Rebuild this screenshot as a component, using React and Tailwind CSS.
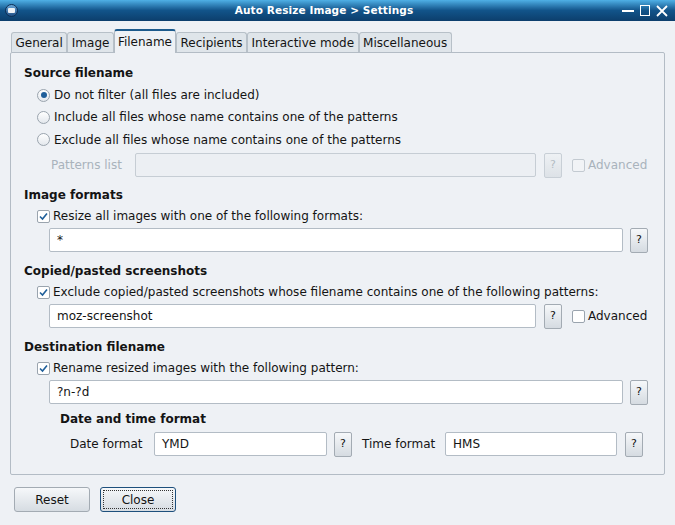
import React from 'react';

function Radio({ on }) {
  return (
    <span className="w-[13px] h-[13px] rounded-full border border-[#9aa4ae] bg-gradient-to-b from-[#ffffff] to-[#e3e8ed] flex items-center justify-center shrink-0">
      {on && <span className="w-[6px] h-[6px] rounded-full bg-[#1f5f9a]" />}
    </span>
  );
}

function Check({ on, disabled }) {
  return (
    <span className={`w-[13px] h-[13px] rounded-[2px] border flex items-center justify-center shrink-0 ${disabled ? 'border-[#c3cad1] bg-[#f1f3f6]' : 'border-[#9aa4ae] bg-white'}`}>
      {on && (
        <svg width="9" height="9" viewBox="0 0 9 9">
          <path d="M1 4.5 L3.5 7 L8 1.5" fill="none" stroke="#1f5f9a" strokeWidth="1.6" />
        </svg>
      )}
    </span>
  );
}

function Help({ disabled }) {
  return (
    <span className={`w-[18px] h-[25px] rounded-[2px] border flex items-center justify-center text-[11px] shrink-0 bg-gradient-to-b ${disabled ? 'border-[#c8cfd6] from-[#eef1f4] to-[#dde2e7] text-[#b3bcc4]' : 'border-[#a3abb3] from-[#f6f8fa] to-[#d5dbe1] text-[#111]'}`}>
      ?
    </span>
  );
}

function Field({ w, value, disabled }) {
  return (
    <div className={`h-[24px] border rounded-[2px] px-[7px] flex items-center ${w} ${disabled ? 'border-[#c6cdd4] bg-[#eceff3]' : 'border-[#b3bcc5] bg-white'}`}>
      {value}
    </div>
  );
}

function Heading({ children, className = '' }) {
  return <div className={`h-[22px] flex items-center font-bold ${className}`}>{children}</div>;
}

const tabs = ['General', 'Image', 'Filename', 'Recipients', 'Interactive mode', 'Miscellaneous'];

export default function App() {
  return (
    <div className="w-[675px] h-[525px] bg-[#eef1f5] font-['DejaVu_Sans',sans-serif] text-[12px] text-[#141414] flex flex-col overflow-hidden">
      {/* title bar */}
      <div className="h-[21px] bg-gradient-to-b from-[#4fb0e6] via-[#12548a] to-[#0c3e6c] flex items-center px-[5px] text-white">
        <span className="w-[13px] h-[13px] rounded-full bg-gradient-to-b from-[#6aa7d8] to-[#1f4f86] border border-[#0d2f55] flex items-center justify-center">
          <span className="w-[7px] h-[5px] bg-[#eef2f6] rounded-[1px]" />
        </span>
        <div className="flex-1 text-center font-bold text-[10.5px] tracking-[0.1px] pl-[8px]">Auto Resize Image &gt; Settings</div>
        <div className="flex items-center gap-[6px] pr-[2px]">
          <span className="w-[12px] h-[2px] bg-white" />
          <span className="w-[10px] h-[11px] border-[1.5px] border-white" />
          <svg width="12" height="12" viewBox="0 0 12 12">
            <path d="M1 1 L11 11 M11 1 L1 11" stroke="white" strokeWidth="1.8" />
          </svg>
        </div>
      </div>

      <div className="px-[10px] pt-[8px] flex flex-col">
        {/* tabs */}
        <div className="h-[23px] flex items-end pl-[1px] relative z-10">
          {tabs.map((t) =>
            t === 'Filename' ? (
              <div key={t} className="h-[24px] -mb-[1px] px-[3px] flex items-center bg-[#eef1f5] border-x border-[#b3bcc5] border-t-2 border-t-[#1c5a8c] rounded-t-[3px]">
                {t}
              </div>
            ) : (
              <div key={t} className="h-[20px] px-[3.5px] flex items-center bg-[#dfe5ea] border border-b-0 border-[#b7c0c8] rounded-t-[3px]">
                {t}
              </div>
            )
          )}
        </div>

        {/* panel */}
        <div className="h-[423px] border border-[#b3bcc5] rounded-[2px] pt-[9px] pl-[13px] flex flex-col">
          <Heading>Source filename</Heading>
          <div className="h-[22px] flex items-center gap-[4px] ml-[13px]"><Radio on />Do not filter (all files are included)</div>
          <div className="h-[22px] flex items-center gap-[4px] ml-[13px]"><Radio />Include all files whose name contains one of the patterns</div>
          <div className="h-[23px] flex items-center gap-[4px] ml-[13px]"><Radio />Exclude all files whose name contains one of the patterns</div>
          <div className="h-[28px] flex items-center ml-[27px]">
            <span className="w-[84px] text-[#a9b3bc]">Patterns list</span>
            <Field w="w-[401px]" disabled />
            <span className="ml-[8px]"><Help disabled /></span>
            <span className="ml-[10px] flex items-center gap-[3px] text-[#a9b3bc]"><Check disabled />Advanced</span>
          </div>

          <Heading className="mt-[5px]">Image formats</Heading>
          <div className="h-[20px] flex items-center gap-[3px] ml-[13px]"><Check on />Resize all images with one of the following formats:</div>
          <div className="h-[24px] mt-[2px] flex items-center ml-[25px]">
            <Field w="w-[574px]" value="*" />
            <span className="ml-[7px]"><Help /></span>
          </div>

          <Heading className="mt-[8px]">Copied/pasted screenshots</Heading>
          <div className="h-[20px] flex items-center gap-[3px] ml-[13px]"><Check on />Exclude copied/pasted screenshots whose filename contains one of the following patterns:</div>
          <div className="h-[24px] mt-[2px] flex items-center ml-[25px]">
            <Field w="w-[487px]" value="moz-screenshot" />
            <span className="ml-[8px]"><Help /></span>
            <span className="ml-[10px] flex items-center gap-[3px]"><Check />Advanced</span>
          </div>

          <Heading className="mt-[8px]">Destination filename</Heading>
          <div className="h-[20px] flex items-center gap-[3px] ml-[13px]"><Check on />Rename resized images with the following pattern:</div>
          <div className="h-[24px] mt-[2px] flex items-center ml-[25px]">
            <Field w="w-[574px]" value="?n-?d" />
            <span className="ml-[7px]"><Help /></span>
          </div>

          <Heading className="mt-[4px] ml-[36px]">Date and time format</Heading>
          <div className="h-[24px] mt-[2px] flex items-center ml-[46px]">
            <span className="w-[84px]">Date format</span>
            <Field w="w-[173px]" value="YMD" />
            <span className="ml-[7px]"><Help /></span>
            <span className="ml-[10px] w-[83px]">Time format</span>
            <Field w="w-[172px]" value="HMS" />
            <span className="ml-[8px]"><Help /></span>
          </div>
        </div>

        {/* buttons */}
        <div className="flex gap-[10px] mt-[12px] ml-[4px]">
          <div className="w-[76px] h-[25px] border border-[#a3abb3] rounded-[3px] bg-gradient-to-b from-[#f6f8fa] to-[#d6dce2] flex items-center justify-center">Reset</div>
          <div className="w-[76px] h-[25px] border border-[#1d4f7c] rounded-[3px] bg-gradient-to-b from-[#f6f8fa] to-[#d6dce2] flex items-center justify-center p-[2px]">
            <span className="w-full h-full border border-dotted border-[#333] flex items-center justify-center">Close</span>
          </div>
        </div>
      </div>
    </div>
  );
}
